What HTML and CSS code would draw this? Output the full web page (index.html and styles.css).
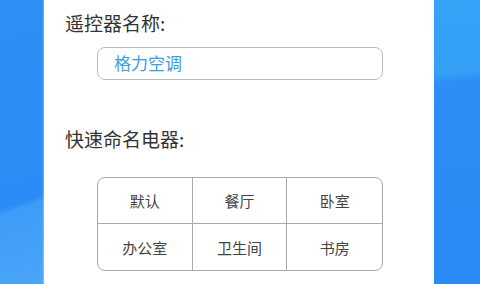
FILE: index.html
```html
<!DOCTYPE html>
<html lang="zh-CN">
  <head>
    <meta charset="UTF-8" />
    <meta name="viewport" content="width=device-width, initial-scale=1.0" />
    <title>遥控器名称</title>
    <link rel="stylesheet" href="styles.css">
  </head>
  <body>
    <div class="screen">
      <div class="side left"></div>
      <div class="panel">
        <h3 class="label">遥控器名称:</h3>
        <div class="name-box">格力空调</div>
        <h3 class="label quick">快速命名电器:</h3>
        <div class="grid">
          <div class="cell">默认</div>
          <div class="cell">餐厅</div>
          <div class="cell">卧室</div>
          <div class="cell">办公室</div>
          <div class="cell">卫生间</div>
          <div class="cell">书房</div>
        </div>
      </div>
      <div class="side right"></div>
    </div>
  </body>
</html>
```

FILE: styles.css
```css
html, body {
  margin: 0;
  padding: 0;
}
body {
  font-family: "Noto Sans CJK SC", "Noto Sans", sans-serif;
}
.screen {
  display: flex;
  width: 480px;
  height: 284px;
  overflow: hidden;
}
.side {
  flex: none;
}
.side.left {
  width: 44px;
  background: linear-gradient(160deg, #2e8ff6 0%, #2a8cf6 70%, #3d9cf7 72%, #4aa5f8 100%);
}
.side.right {
  width: 46px;
  background: linear-gradient(175deg, #36a2f6 0%, #33a0f6 26%, #2d8ef6 29%, #2a8af6 100%);
}
.panel {
  flex: none;
  width: 390px;
  background: #fff;
  box-shadow: 0 0 2px #d8ecff;
  padding: 0 0 0 21px;
  box-sizing: border-box;
}
.label {
  margin: 0;
  font-weight: normal;
  font-size: 19px;
  line-height: 24px;
  color: #333;
  padding-top: 11px;
}
.label.quick {
  padding-top: 47px;
}
.name-box {
  margin: 12px 0 0 32px;
  width: 286px;
  height: 33px;
  box-sizing: border-box;
  border: 1.5px solid #bbb;
  border-radius: 8px;
  padding-left: 16px;
  font-size: 17px;
  line-height: 29px;
  color: #3d9be0;
}
.grid {
  margin: 26px 0 0 32px;
  width: 286px;
  height: 94px;
  box-sizing: border-box;
  border: 1.5px solid #aaa;
  border-radius: 8px;
  display: grid;
  grid-template-columns: 1fr 1fr 1fr;
  grid-template-rows: 1fr 1fr;
  overflow: hidden;
}
.cell {
  display: flex;
  align-items: center;
  justify-content: center;
  font-size: 15px;
  color: #444;
  border-right: 1px solid #aaa;
  border-bottom: 1px solid #aaa;
}
.cell:nth-child(3n) {
  border-right: none;
}
.cell:nth-child(n+4) {
  border-bottom: none;
}
```
